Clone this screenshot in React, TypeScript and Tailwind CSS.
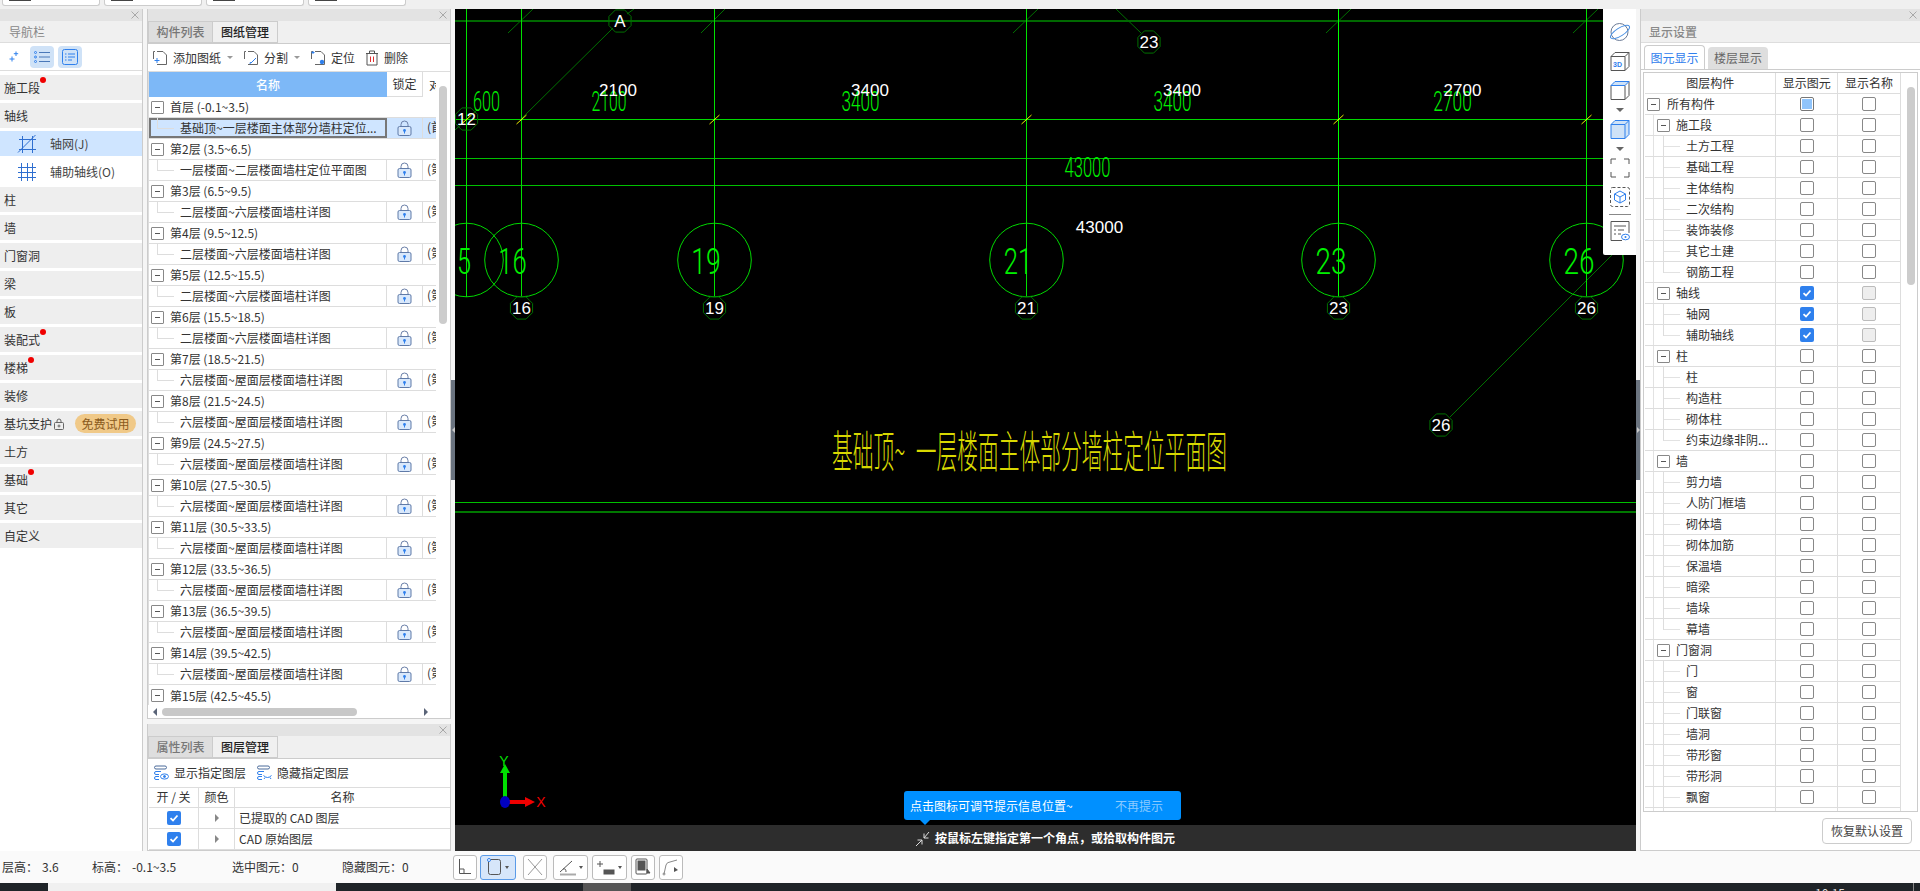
import { ReactNode } from "react";

const floors: [string, string][] = [
  ["首层 (-0.1~3.5)", "基础顶~一层楼面主体部分墙柱定位..."],
  ["第2层 (3.5~6.5)", "一层楼面~二层楼面墙柱定位平面图"],
  ["第3层 (6.5~9.5)", "二层楼面~六层楼面墙柱详图"],
  ["第4层 (9.5~12.5)", "二层楼面~六层楼面墙柱详图"],
  ["第5层 (12.5~15.5)", "二层楼面~六层楼面墙柱详图"],
  ["第6层 (15.5~18.5)", "二层楼面~六层楼面墙柱详图"],
  ["第7层 (18.5~21.5)", "六层楼面~屋面层楼面墙柱详图"],
  ["第8层 (21.5~24.5)", "六层楼面~屋面层楼面墙柱详图"],
  ["第9层 (24.5~27.5)", "六层楼面~屋面层楼面墙柱详图"],
  ["第10层 (27.5~30.5)", "六层楼面~屋面层楼面墙柱详图"],
  ["第11层 (30.5~33.5)", "六层楼面~屋面层楼面墙柱详图"],
  ["第12层 (33.5~36.5)", "六层楼面~屋面层楼面墙柱详图"],
  ["第13层 (36.5~39.5)", "六层楼面~屋面层楼面墙柱详图"],
  ["第14层 (39.5~42.5)", "六层楼面~屋面层楼面墙柱详图"],
];

const navItems = [
  { name: "施工段", dot: true },
  { name: "轴线" },
  { name: "轴网(J)", sub: "grid" },
  { name: "辅助轴线(O)", sub: "aux" },
  { name: "柱" },
  { name: "墙" },
  { name: "门窗洞" },
  { name: "梁" },
  { name: "板" },
  { name: "装配式", dot: true },
  { name: "楼梯", dot: true },
  { name: "装修" },
  { name: "基坑支护", trial: true },
  { name: "土方" },
  { name: "基础", dot: true },
  { name: "其它" },
  { name: "自定义" },
];

const layerGroups: { name: string; on?: boolean; children: string[] }[] = [
  { name: "施工段", children: ["土方工程", "基础工程", "主体结构", "二次结构", "装饰装修", "其它土建", "钢筋工程"] },
  { name: "轴线", on: true, children: ["轴网", "辅助轴线"] },
  { name: "柱", children: ["柱", "构造柱", "砌体柱", "约束边缘非阴..."] },
  { name: "墙", children: ["剪力墙", "人防门框墙", "砌体墙", "砌体加筋", "保温墙", "暗梁", "墙垛", "幕墙"] },
  { name: "门窗洞", children: ["门", "窗", "门联窗", "墙洞", "带形窗", "带形洞", "飘窗", ""] },
];

const Check = ({ state }: { state?: "on" | "partial" | "off" | "disabled" }) => {
  if (state === "on") {
    return (
      <div className="flex h-[14px] w-[14px] items-center justify-center rounded-[2px] bg-[#2f80ed]">
        <svg width="10" height="10" viewBox="0 0 10 10" fill="none" stroke="#fff" strokeWidth="1.8">
          <path d="M1.5 5.2 4 7.5 8.5 2.5" />
        </svg>
      </div>
    );
  }
  if (state === "partial") {
    return (
      <div className="flex h-[14px] w-[14px] items-center justify-center rounded-[2px] border border-[#777] bg-white">
        <div className="h-[10px] w-[10px] bg-[#90c4fb]" />
      </div>
    );
  }
  return (
    <div
      className={
        state === "disabled"
          ? "h-[14px] w-[14px] rounded-[2px] border border-[#bbb] bg-[#eee]"
          : "h-[14px] w-[14px] rounded-[2px] border border-[#888] bg-white"
      }
    />
  );
};

const TreeBox = () => (
  <div className="z-10 flex h-[13px] w-[13px] shrink-0 items-center justify-center rounded-[1px] border border-[#888] bg-white">
    <div className="h-px w-[5px] bg-[#555]" />
  </div>
);

const Lock = () => (
  <svg width="15" height="16" viewBox="0 0 15 16" fill="none">
    <path d="M4 7V4.5a3.5 3.5 0 0 1 7 0V7" stroke="#6b7fa8" />
    <rect x="1" y="6.5" width="13" height="9" rx="1.5" fill="#d9e8fb" stroke="#5f7aa8" />
    <circle cx="7.5" cy="10.5" r="1.4" fill="#2f80ed" />
    <rect x="7" y="10.5" width="1" height="3" fill="#2f80ed" />
  </svg>
);

const Close = () => (
  <svg width="8" height="8" viewBox="0 0 8 8" stroke="#a8a8a8" strokeWidth="1">
    <path d="M0.5 0.5 7.5 7.5M7.5 0.5 0.5 7.5" />
  </svg>
);

const PanelBar = () => (
  <div className="flex h-[12px] shrink-0 items-center justify-end bg-[#e3e3e3] pr-[3px]">
    <Close />
  </div>
);

const Caret = () => <div className="h-0 w-0 border-x-[3px] border-t-[3px] border-x-transparent border-t-[#999]" />;

const Tabs = ({ first, second }: { first: string; second: string }) => (
  <div className="flex h-[23px] shrink-0 border-b border-[#ccc] bg-[#f0f0f0] text-[12px] font-medium">
    <div className="flex w-[65px] items-center justify-center border border-[#ccc] bg-[#dedede] text-[#777]">{first}</div>
    <div className="flex w-[65px] items-center justify-center border-y border-r border-[#ccc] text-[#222]">{second}</div>
  </div>
);

const Dashed = ({ children }: { children?: ReactNode }) => (
  <svg width="16" height="16" viewBox="0 0 16 16" fill="none" stroke="#666" strokeWidth="1">
    <path d="M5 1.5H11L14.5 5V14.5H5M1.5 9V1.5H3" />
    {children}
  </svg>
);

const ToolItem = ({ icon, label, caret }: { icon: ReactNode; label: string; caret?: boolean }) => (
  <div className="flex items-center gap-[5px]">
    {icon}
    <span>{label}</span>
    {caret && <span className="ml-px"><Caret /></span>}
  </div>
);

const LayerIcon = ({ eye }: { eye?: boolean }) => (
  <svg width="16" height="16" viewBox="0 0 16 16" fill="none" stroke="#2f80ed" strokeWidth="1">
    <rect x="1.5" y="1" width="12" height="3" rx="1.5" stroke="#4a6a9a" />
    <path d="M8 6.5H3a1.5 1.5 0 0 0 0 3h3M6 11.5H3a1.5 1.5 0 0 0 0 3h3" />
    {eye ? (
      <>
        <ellipse cx="11.5" cy="11.5" rx="4" ry="2.6" />
        <circle cx="11.5" cy="11.5" r="1" fill="#2f80ed" />
      </>
    ) : (
      <path d="M7.5 10.5q4 4 8 0M9 12.5l-1 1.5M14 12.5l1 1.5" />
    )}
  </svg>
);

const NavRow = ({ item }: { item: (typeof navItems)[number] }) => {
  if (item.sub) {
    const active = item.sub === "grid";
    return (
      <div className={active ? "mb-[3px] flex h-[25px] items-center bg-[#cfe5ff]" : "mb-[3px] flex h-[25px] items-center bg-white"}>
        <span className="ml-[17px] w-[33px]">
          {active ? (
            <svg width="20" height="20" viewBox="0 0 20 20" stroke="#2f6fd0" strokeWidth="1">
              <path d="M2 5.5H19M2 15.5H19M5.5 2V19M15.5 2V19M1 18.5 18.5 1" />
            </svg>
          ) : (
            <svg width="20" height="20" viewBox="0 0 20 20" stroke="#2f6fd0" strokeWidth="1">
              <path d="M1 5.5H19M1 10.5H19M1 15.5H19M4.5 1V19M10.5 1V19M15.5 1V19" />
            </svg>
          )}
        </span>
        <span className="text-[12px] text-[#444]">{item.name}</span>
      </div>
    );
  }
  return (
    <div className="mb-[3px] flex h-[25px] items-center bg-[#eeeeee] pl-[4px] text-[12px] text-[#333]">
      <span className="relative">
        {item.name}
        {item.dot && <span className="absolute -right-[6px] -top-[2px] h-[6px] w-[6px] rounded-full bg-[#f00000]" />}
      </span>
      {item.trial && (
        <>
          <svg className="ml-[2px]" width="10" height="12" viewBox="0 0 10 12" fill="none" stroke="#666">
            <path d="M3 5V3a2 2 0 0 1 4 0v2" />
            <rect x="0.5" y="4.5" width="9" height="7" rx="1" />
            <circle cx="5" cy="8" r="1" />
          </svg>
          <span className="ml-[11px] flex h-[19px] w-[61px] items-center justify-center rounded-full bg-[#f0c988] text-[12px] text-[#8a5a1c]">
            免费试用
          </span>
        </>
      )}
    </div>
  );
};

const Nav = () => (
  <aside className="flex w-[143px] shrink-0 flex-col border-r border-[#ccc] bg-white">
    <PanelBar />
    <div className="flex h-[22px] items-center border-b border-[#ddd] bg-[#f0f0f0] pl-[9px] text-[12px] text-[#888]">导航栏</div>
    <div className="flex h-[28px] items-center border-b border-[#ddd] pl-[9px]">
      <svg width="10" height="11" viewBox="0 0 10 11" stroke="#2f80ed" strokeWidth="1">
        <path d="M7 0.5V5M4.8 2.7H9.2M3 5.5V10.5M0.5 8H5.5" />
      </svg>
      <span className="ml-[11px] flex h-[22px] w-[24px] items-center justify-center rounded-[4px] bg-[#cfe2f7]">
        <svg width="16" height="14" viewBox="0 0 16 14" fill="none" stroke="#2f80ed">
          <path d="M5 2.5H16M5 7H16M5 11.5H16" stroke="#4a78b8" />
          <circle cx="1.5" cy="2.5" r="1" />
          <circle cx="1.5" cy="7" r="1" />
          <circle cx="1.5" cy="11.5" r="1" />
        </svg>
      </span>
      <span className="ml-[4px] flex h-[22px] w-[24px] items-center justify-center rounded-[4px] bg-[#cfe2f7]">
        <svg width="16" height="16" viewBox="0 0 16 16" fill="none" stroke="#2f80ed">
          <rect x="0.5" y="0.5" width="15" height="15" rx="2" />
          <path d="M3 5H4.5M6 5H13M3 8H4.5M6 8H13M3 11H4.5M6 11H10" />
        </svg>
      </span>
    </div>
    <div className="pt-[4px]">
      {navItems.map((item) => (
        <NavRow key={item.name} item={item} />
      ))}
    </div>
  </aside>
);

const DrawingPanel = () => (
  <section className="flex h-[710px] shrink-0 flex-col border-x border-b border-[#ccc] bg-white">
    <PanelBar />
    <Tabs first="构件列表" second="图纸管理" />
    <div className="flex h-[28px] shrink-0 items-center gap-[10px] border-b border-[#ddd] pl-[4px] text-[12px] text-[#333]">
      <ToolItem
        caret
        label="添加图纸"
        icon={
          <Dashed>
            <path d="M5 8V13M2.5 10.5H7.5" stroke="#2f80ed" />
          </Dashed>
        }
      />
      <ToolItem
        caret
        label="分割"
        icon={
          <Dashed>
            <path d="M8 13 13 8M7 14l.5-2" stroke="#2f80ed" />
          </Dashed>
        }
      />
      <ToolItem
        label="定位"
        icon={
          <Dashed>
            <circle cx="12" cy="12" r="2.2" fill="#2f80ed" stroke="none" />
            <path d="M3 1V4M1.5 2.5H4.5" stroke="#2f80ed" />
          </Dashed>
        }
      />
      <ToolItem
        label="删除"
        icon={
          <svg width="14" height="16" viewBox="0 0 14 16" fill="none" stroke="#555">
            <path d="M1 3.5H13M4.5 3.5V1H9.5V3.5M2 3.5V15H12V3.5" />
            <path d="M5.5 6.5V12M8.5 6.5V12" stroke="#e03030" />
          </svg>
        }
      />
    </div>
    <div className="relative min-h-0 flex-1 overflow-hidden">
      <div className="h-[633px] w-[288px] overflow-hidden border-l border-[#ddd] text-[12px] text-[#333]">
        <div className="flex h-[25px] w-[300px]">
          <div className="flex w-[238px] items-center justify-center bg-[#7db8f7] font-medium text-white">名称</div>
          <div className="flex w-[36px] items-center justify-center border-r border-b border-[#ddd]">锁定</div>
          <div className="flex w-[26px] items-center overflow-hidden whitespace-nowrap pl-[6px]">对应楼层</div>
        </div>
        {floors.map(([floor, sheet], i) => (
          <div key={floor}>
            <div className="flex h-[21px] items-center border-b border-[#ddd] pl-[2px]">
              <TreeBox />
              <span className="ml-[6px] whitespace-nowrap">{floor}</span>
            </div>
            <div className="relative flex h-[21px] w-[300px] border-b border-[#ddd]">
              <div className="absolute left-[8px] top-0 h-[11px] w-[17px] border-b border-l border-[#ddd]" />
              <div
                className={
                  i === 0
                    ? "flex w-[238px] items-center border-2 border-[#777] bg-[#cfe5ff] pl-[29px]"
                    : "flex w-[238px] items-center border-r border-[#ddd] pl-[31px]"
                }
              >
                {sheet}
              </div>
              <div className={i === 0 ? "flex w-[36px] items-center justify-center border-r border-[#ddd] bg-[#cfe5ff]" : "flex w-[36px] items-center justify-center border-r border-[#ddd]"}>
                <Lock />
              </div>
              <div className={i === 0 ? "w-[26px] overflow-hidden whitespace-nowrap bg-[#cfe5ff] pl-[4px]" : "w-[26px] overflow-hidden whitespace-nowrap pl-[4px]"}>
                {i === 0 ? "(首层)" : `(第${i + 1}层)`}
              </div>
            </div>
          </div>
        ))}
        <div className="flex h-[21px] items-center pl-[2px]">
          <TreeBox />
          <span className="ml-[6px] whitespace-nowrap">第15层 (42.5~45.5)</span>
        </div>
      </div>
      <div className="absolute right-[3px] top-[14px] h-[238px] w-[8px] rounded-full bg-[#cccccc]" />
      <div className="flex h-[13px] items-center">
        <div className="ml-[5px] h-0 w-0 border-y-[4px] border-r-[4px] border-y-transparent border-r-[#5a6478]" />
        <div className="ml-[5px] h-[8px] w-[195px] rounded-full bg-[#c8c8c8]" />
        <div className="ml-[67px] h-0 w-0 border-y-[4px] border-l-[4px] border-y-transparent border-l-[#5a6478]" />
      </div>
    </div>
  </section>
);

const LayerPanel = () => (
  <section className="mt-[5px] flex min-h-0 flex-1 flex-col border border-t-0 border-[#ccc] bg-white">
    <PanelBar />
    <Tabs first="属性列表" second="图层管理" />
    <div className="flex h-[28px] shrink-0 items-center gap-[10px] pl-[5px] text-[12px] text-[#333]">
      <ToolItem label="显示指定图层" icon={<LayerIcon eye />} />
      <ToolItem label="隐藏指定图层" icon={<LayerIcon />} />
    </div>
    <div className="ml-[1px] text-[12px] text-[#333]">
      <div className="flex h-[21px] border-y border-[#ddd] text-center">
        <div className="w-[50px] border-r border-[#ddd]">开 / 关</div>
        <div className="w-[36px] border-r border-[#ddd]">颜色</div>
        <div className="flex-1">名称</div>
      </div>
      {["已提取的 CAD 图层", "CAD 原始图层"].map((name) => (
        <div key={name} className="flex h-[21px] items-center border-b border-[#ddd]">
          <div className="flex h-full w-[50px] items-center justify-center border-r border-[#ddd]">
            <Check state="on" />
          </div>
          <div className="flex h-full w-[36px] items-center justify-center border-r border-[#ddd]">
            <div className="h-0 w-0 border-y-[4px] border-l-[4px] border-y-transparent border-l-[#888]" />
          </div>
          <div className="pl-[4px]">{name}</div>
        </div>
      ))}
    </div>
  </section>
);

const Handle = ({ left }: { left?: boolean }) => (
  <div className="flex w-[4px] shrink-0 items-center">
    <div className="mb-[1px] flex h-[100px] w-[4px] items-center justify-center bg-[#6b7480]">
      {left ? (
        <div className="h-0 w-0 border-y-[3px] border-r-[3px] border-y-transparent border-r-[#c8c8c8]" />
      ) : (
        <div className="h-0 w-0 border-y-[3px] border-l-[3px] border-y-transparent border-l-[#c8c8c8]" />
      )}
    </div>
  </div>
);

const axes = [
  { x: 466.5, n: "", big: "5", bigX: 464, w: 14 },
  { x: 521.5, n: "16", big: "16", bigX: 512.5, w: 28.5 },
  { x: 714.5, n: "19", big: "19", bigX: 706, w: 29.5 },
  { x: 1026.5, n: "21", big: "21", bigX: 1018, w: 28.5 },
  { x: 1338.5, n: "23", big: "23", bigX: 1331, w: 31 },
  { x: 1586.5, n: "26", big: "26", bigX: 1579, w: 31 },
];

const shortDiagonals = [
  [508, 33, 533, 9],
  [701, 33, 725, 9],
  [1013, 33, 1038, 9],
  [1326, 33, 1351, 9],
  [1573, 33, 1598, 9],
  [1116, 9, 1141, 33],
  [521, 119, 613, 28],
  [627, 14, 634, 9],
  [455, 130, 477, 110],
  [1450, 417, 1636, 231],
];

const whiteLabels: [string, number, number][] = [
  ["2100", 618, 96],
  ["3400", 870, 96],
  ["3400", 1182, 96],
  ["2700", 1462.5, 96],
  ["43000", 1099.5, 233],
];

const greenLabels: [string, number, number, number][] = [
  ["600", 486.5, 111, 27],
  ["2100", 609, 111, 35],
  ["3400", 860.5, 111, 38],
  ["3400", 1172.5, 111, 38],
  ["2700", 1452.5, 111, 38.5],
  ["43000", 1087.5, 177, 46],
];

const Octagon = ({ x, y, label }: { x: number; y: number; label: string }) => {
  const r = 12;
  const pts = Array.from({ length: 8 }, (_, i) => {
    const a = Math.PI / 8 + (i * Math.PI) / 4;
    return `${x + r * Math.cos(a)},${y + r * Math.sin(a)}`;
  }).join(" ");
  return (
    <g>
      <polygon points={pts} fill="none" stroke="#007000" />
      <text x={x} y={y + 6} textAnchor="middle" fontSize="17" fill="#fff" fontFamily="Liberation Sans">
        {label}
      </text>
    </g>
  );
};

const CadDrawing = () => (
  <svg className="absolute inset-0" width="1181" height="842" viewBox="455 9 1181 842">
    <rect x="455" y="9" width="1181" height="842" fill="#000" />
    <g stroke="#007000" strokeWidth="1">
      {shortDiagonals.map(([a, b, c, d]) => (
        <line key={`${a}-${b}`} x1={a} y1={b} x2={c} y2={d} />
      ))}
    </g>
    <g shapeRendering="crispEdges">
      <line x1="455" y1="20.5" x2="1636" y2="20.5" stroke="#006800" strokeWidth="2" />
      <line x1="455" y1="119.5" x2="1636" y2="119.5" stroke="#00d800" />
      <line x1="455" y1="158.5" x2="1636" y2="158.5" stroke="#00c000" />
      <line x1="455" y1="185.5" x2="1636" y2="185.5" stroke="#00c000" />
      <line x1="455" y1="502.5" x2="1636" y2="502.5" stroke="#00c000" />
      <line x1="455" y1="512" x2="1636" y2="512" stroke="#007800" strokeWidth="2" />
      {axes.map((a) => (
        <line key={a.x} x1={a.x} y1="9" x2={a.x} y2="297" stroke={a.n === "23" ? "#00ff00" : "#00e000"} />
      ))}
    </g>
    {axes.map((a) => (
      <g key={a.x}>
        <circle cx={a.x} cy="260" r="36.8" fill="none" stroke="#00d800" />
        <text x={a.bigX} y="274" textAnchor="middle" fontSize="36" fontWeight="300" fill="#00f000" fontFamily="Roboto" textLength={a.w} lengthAdjust="spacingAndGlyphs">
          {a.big}
        </text>
        {a.n && <Octagon x={a.x} y={308} label={a.n} />}
        <line x1={a.x - 5} y1="124" x2={a.x + 5} y2="115" stroke="#f0f000" />
      </g>
    ))}
    {greenLabels.map(([t, x, y, w]) => (
      <text key={`${t}-${x}`} x={x} y={y} textAnchor="middle" fontSize="28" fontWeight="300" fill="#00f000" fontFamily="Roboto" textLength={w} lengthAdjust="spacingAndGlyphs">
        {t}
      </text>
    ))}
    {whiteLabels.map(([t, x, y]) => (
      <text key={`${t}-${x}`} x={x} y={y} textAnchor="middle" fontSize="17" fill="#fff" fontFamily="Liberation Sans">
        {t}
      </text>
    ))}
    <Octagon x={620} y={21} label="A" />
    <Octagon x={466.5} y={119} label="12" />
    <Octagon x={1149} y={42} label="23" />
    <Octagon x={1441} y={425} label="26" />
    <text x="832" y="468" fontSize="44" fontWeight="200" fill="#d8d800" fontFamily="Noto Sans CJK SC" textLength="395" lengthAdjust="spacingAndGlyphs">
      基础顶~{"\u2002"}一层楼面主体部分墙柱定位平面图
    </text>
    {/* coordinate axes */}
    <rect x="503" y="771" width="4" height="30" fill="#00e000" />
    <path d="M505 764 510 773H500Z" fill="#00e000" />
    <rect x="505" y="800" width="22" height="4" fill="#f00000" />
    <path d="M535 802 525 797V807Z" fill="#f00000" />
    <ellipse cx="505" cy="802" rx="5" ry="6" fill="#0000c0" />
    <text x="541" y="807" textAnchor="middle" fontSize="14" fill="#f00000" fontFamily="Liberation Sans">X</text>
    <text x="504" y="766" textAnchor="middle" fontSize="14" fill="#00e000" fontFamily="Liberation Sans">Y</text>
  </svg>
);

const FloatBar = () => (
  <div className="absolute right-0 top-0 flex h-[246px] w-[33px] flex-col items-center rounded-bl-[2px] bg-white pt-[13px]">
    <svg width="22" height="20" viewBox="0 0 22 20" fill="none" stroke="#6a7a95">
      <circle cx="10.5" cy="10" r="8.5" />
      <ellipse cx="11" cy="10" rx="11" ry="4" transform="rotate(-32 11 10)" stroke="#4a90e2" />
    </svg>
    <svg className="mt-[9px]" width="20" height="20" viewBox="0 0 20 20" fill="none" stroke="#555">
      <path d="M1 5.5 5 1.5H19V15.5L15 19.5H1ZM1 5.5H15V19.5M15 5.5 19 1.5" />
      <text x="3" y="16" fontSize="7" fontWeight="700" fill="#2f80ed" stroke="none" fontFamily="Liberation Sans">3D</text>
    </svg>
    <svg className="mt-[9px]" width="20" height="20" viewBox="0 0 20 20" fill="none" stroke="#555">
      <path d="M1 5.5V19.5H15L19 15.5V1.5M15 5.5V19.5" />
      <path d="M1 5.5 5 1.5H19L15 5.5H1Z" fill="#cfe2f7" stroke="#2f80ed" />
    </svg>
    <div className="mt-[8px] h-0 w-0 border-x-[4px] border-t-[4px] border-x-transparent border-t-[#666]" />
    <svg className="mt-[7px]" width="20" height="20" viewBox="0 0 20 20" fill="#cfe2f7" stroke="#2f80ed">
      <path d="M1 5.5 5 1.5H19V15.5L15 19.5H1Z" />
      <path d="M1 5.5H15V19.5M15 5.5 19 1.5" fill="none" />
    </svg>
    <div className="mt-[8px] h-0 w-0 border-x-[4px] border-t-[4px] border-x-transparent border-t-[#666]" />
    <svg className="mt-[7px]" width="20" height="20" viewBox="0 0 20 20" fill="none" stroke="#555">
      <path d="M1 6V1H6M14 1H19V6M19 14V19H14M6 19H1V14" />
    </svg>
    <svg className="mt-[9px]" width="20" height="20" viewBox="0 0 20 20" fill="none">
      <rect x="0.5" y="0.5" width="19" height="19" rx="2" stroke="#555" strokeDasharray="3 2" />
      <path d="M10 4 15.5 7V13L10 16 4.5 13V7ZM4.5 7 10 10 15.5 7M10 10V16" stroke="#2f80ed" />
    </svg>
    <div className="mt-[7px] h-px w-[22px] bg-[#888]" />
    <svg className="mt-[6px]" width="20" height="20" viewBox="0 0 20 20" fill="none">
      <path d="M12 19.5H1V0.5H19V12" stroke="#555" />
      <path d="M4 5H16M4 9H6M8 9H14M4 13H6M8 13H11" stroke="#555" />
      <ellipse cx="15.5" cy="16" rx="4" ry="2.8" stroke="#2f80ed" />
      <circle cx="15.5" cy="16" r="1" fill="#2f80ed" />
    </svg>
  </div>
);

const Canvas = () => (
  <main className="relative flex min-w-0 flex-1 flex-col justify-end bg-black">
    <CadDrawing />
    <FloatBar />
    <div className="absolute left-[449px] top-[782px] flex h-[29px] w-[277px] items-center justify-between rounded-[3px] bg-[#0090ff] px-[6px] text-[12px] text-white">
      <span>点击图标可调节提示信息位置~</span>
      <span className="mr-[12px] text-[#8ccbff]">不再提示</span>
      <div className="absolute left-[16px] top-full h-0 w-0 border-x-[5px] border-t-[5px] border-x-transparent border-t-[#0090ff]" />
    </div>
    <div className="relative flex h-[26px] items-center bg-[#2d2d2d] pl-[460px] text-[12px] font-bold text-white">
      <svg width="16" height="16" viewBox="0 0 16 16" fill="none" stroke="#ddd" className="mr-[4px] mt-[2px]">
        <path d="M14 1 9 7M9 2.5V7H13.5M1 15 7 9M2.5 9H7V13.5" />
      </svg>
      按鼠标左键指定第一个角点，或拾取构件图元
    </div>
  </main>
);

const SettingsRow = ({ name, level, col1, col2, last }: { name: string; level: number; col1?: "on" | "partial"; col2?: "disabled"; last?: boolean }) => (
  <div className="relative flex h-[21px] items-center border-b border-[#ddd] text-[12px] text-[#333]">
    {level > 0 && <div className="absolute left-[8px] top-0 h-full w-px bg-[#e2e2e2]" />}
    {level === 2 && <div className={last ? "absolute left-[18px] top-0 h-[11px] w-px bg-[#ddd]" : "absolute left-[18px] top-0 h-full w-px bg-[#ddd]"} />}
    {level === 2 && <div className="absolute left-[19px] top-[10px] h-px w-[16px] bg-[#e2e2e2]" />}
    <div className="flex w-[131px] items-center border-r-0 pl-[2px]">
      {level === 0 && (
        <>
          <TreeBox />
          <span className="ml-[7px]">{name}</span>
        </>
      )}
      {level === 1 && (
        <>
          <span className="ml-[10px]"><TreeBox /></span>
          <span className="ml-[6px]">{name}</span>
        </>
      )}
      {level === 2 && <span className="ml-[39px] whitespace-nowrap">{name}</span>}
    </div>
    <div className="flex h-full w-[63px] items-center justify-center border-x border-[#ddd]">
      <Check state={col1} />
    </div>
    <div className="flex h-full w-[63px] items-center justify-center border-r border-[#ddd]">
      <Check state={col2} />
    </div>
  </div>
);

const SettingsPanel = () => (
  <aside className="flex w-[280px] shrink-0 flex-col border-l border-b border-[#ccc] bg-white">
    <PanelBar />
    <div className="flex h-[22px] items-center border-b border-[#ddd] bg-[#f0f0f0] pl-[8px] text-[12px] font-medium text-[#888]">显示设置</div>
    <div className="flex h-[27px] items-end gap-[3px] border-b border-[#ccc] pl-[3px] text-[12px]">
      <div className="flex h-[24px] w-[61px] items-center justify-center rounded-t-[4px] border border-b-0 border-[#ccc] text-[#2f80ed]">图元显示</div>
      <div className="flex h-[22px] w-[60px] items-center justify-center rounded-t-[4px] bg-[#dedede] text-[#666]">楼层显示</div>
    </div>
    <div className="relative ml-[2px] mt-[2px] h-[740px] w-[275px] overflow-hidden border border-[#ccc]">
      <div className="w-[257px] pl-px">
        <div className="flex h-[21px] items-center border-b border-[#ddd] text-center text-[12px] text-[#333]">
          <div className="w-[131px]">图层构件</div>
          <div className="flex h-full w-[63px] items-center justify-center border-x border-[#ddd]">显示图元</div>
          <div className="flex h-full w-[63px] items-center justify-center border-r border-[#ddd]">显示名称</div>
        </div>
        <SettingsRow name="所有构件" level={0} col1="partial" />
        {layerGroups.map((g) => (
          <div key={g.name}>
            <SettingsRow name={g.name} level={1} col1={g.on ? "on" : undefined} col2={g.on ? "disabled" : undefined} />
            {g.children.map((c, i) => (
              <SettingsRow
                key={`${c}-${i}`}
                name={c}
                level={2}
                col1={g.on ? "on" : undefined}
                col2={g.on ? "disabled" : undefined}
                last={i === g.children.length - 1}
              />
            ))}
          </div>
        ))}
      </div>
      <div className="absolute right-[2px] top-[14px] h-[198px] w-[8px] rounded-full bg-[#cccccc]" />
    </div>
    <div className="flex flex-1 items-start justify-end pr-[8px] pt-[6px]">
      <div className="flex h-[26px] w-[90px] items-center justify-center rounded-[4px] border border-[#ccc] text-[12px] text-[#444]">恢复默认设置</div>
    </div>
  </aside>
);

const snapBtn = "flex h-[25px] items-center justify-center gap-[3px] rounded-[3px] border border-[#bbb] bg-white";
const BtnCaret = () => <div className="h-0 w-0 border-x-[2.5px] border-t-[3px] border-x-transparent border-t-[#555]" />;

const StatusBar = () => (
  <footer className="flex h-[32px] shrink-0 items-center bg-[#fafafa] text-[12px] text-[#333]">
    <div className="flex w-[453px] shrink-0">
      <span className="ml-[2px] w-[40px]">层高：</span>
      <span className="w-[50px]">3.6</span>
      <span className="w-[40px]">标高：</span>
      <span className="w-[100px]">-0.1~3.5</span>
      <span className="w-[110px]">选中图元：0</span>
      <span>隐藏图元：0</span>
    </div>
    <div className="flex items-center">
      <div className={`${snapBtn} w-[24px]`}>
        <svg width="14" height="18" viewBox="0 0 14 18" fill="none" stroke="#555">
          <path d="M1.5 1V15.5H13M1.5 11H6V15.5" />
        </svg>
      </div>
      <div className="ml-[3px] flex h-[25px] w-[36px] items-center justify-center gap-[3px] rounded-[3px] border border-[#5a9be8] bg-[#d6e6fa]">
        <svg width="15" height="20" viewBox="0 0 15 20" fill="none" stroke="#555">
          <rect x="1.5" y="2.5" width="12" height="15" rx="2" />
          <circle cx="2" cy="3" r="1.5" fill="#fff" stroke="#2f80ed" />
        </svg>
        <BtnCaret />
      </div>
      <div className={`${snapBtn} ml-[7px] w-[24px]`}>
        <svg width="16" height="18" viewBox="0 0 16 18" fill="none" stroke="#999">
          <path d="M1 1 15 17M15 1 1 17" />
        </svg>
      </div>
      <div className={`${snapBtn} ml-[6px] w-[35px]`}>
        <svg width="17" height="18" viewBox="0 0 17 18" fill="none" stroke="#555">
          <path d="M1 14 13 3M7 14Q7 10 4 11" />
          <path d="M1 16.5H17" stroke="#aaa" strokeWidth="2" />
        </svg>
        <BtnCaret />
      </div>
      <div className={`${snapBtn} ml-[4px] w-[35px]`}>
        <svg width="18" height="18" viewBox="0 0 18 18" fill="none" stroke="#555">
          <path d="M3 3V9M0 6H6" />
          <rect x="7" y="12" width="10" height="4" fill="#555" />
        </svg>
        <BtnCaret />
      </div>
      <div className={`${snapBtn} ml-[4px] w-[24px]`}>
        <svg width="16" height="18" viewBox="0 0 16 18" fill="none" stroke="#555">
          <rect x="1" y="1" width="11" height="15" rx="1" />
          <rect x="3" y="3" width="7" height="9" fill="#555" />
          <path d="M12 11 15 15H12Z" fill="#555" />
        </svg>
      </div>
      <div className={`${snapBtn} ml-[4px] w-[24px]`}>
        <svg width="18" height="18" viewBox="0 0 18 18" fill="none" stroke="#888">
          <path d="M2 16 4 7Q5 4 8 4L15 2" />
          <circle cx="2" cy="16" r="1" />
          <path d="M12 9 16 12 12 14Z" fill="#555" stroke="none" />
        </svg>
      </div>
    </div>
  </footer>
);

const TaskBar = () => (
  <div className="flex h-[8px] shrink-0 overflow-hidden bg-[#1f2428]">
    <div className="ml-[48px] h-full w-[288px] bg-[#f0f0f0]" />
    <div className="ml-[247px] h-full w-[48px] bg-[#555555]" />
    <span className="ml-[1184px] mt-[3px] text-[12px] leading-[14px] text-[#ddd]">10:15</span>
    <div className="ml-[68px] h-full w-px bg-[#888]" />
  </div>
);

const TopStrip = () => (
  <div className="flex h-[9px] shrink-0 gap-[4px] bg-[#f0f0f0] pl-[2px]">
    {[0, 1, 2, 3].map((i) => (
      <div key={i} className="h-[6px] w-[98px] rounded-b-[3px] border-x border-b border-[#ccc] bg-white pl-[6px]">
        <div className="h-px w-[22px] bg-[#444]" />
      </div>
    ))}
  </div>
);

export default function App() {
  return (
    <div className="flex h-[891px] w-[1920px] flex-col overflow-hidden bg-[#f5f5f5] font-['Noto_Sans_CJK_SC','Liberation_Sans',sans-serif]">
      <TopStrip />
      <div className="flex min-h-0 flex-1">
        <Nav />
        <div className="ml-[4px] flex w-[304px] shrink-0 flex-col">
          <DrawingPanel />
          <LayerPanel />
        </div>
        <Handle left />
        <Canvas />
        <Handle />
        <SettingsPanel />
      </div>
      <StatusBar />
      <TaskBar />
    </div>
  );
}
